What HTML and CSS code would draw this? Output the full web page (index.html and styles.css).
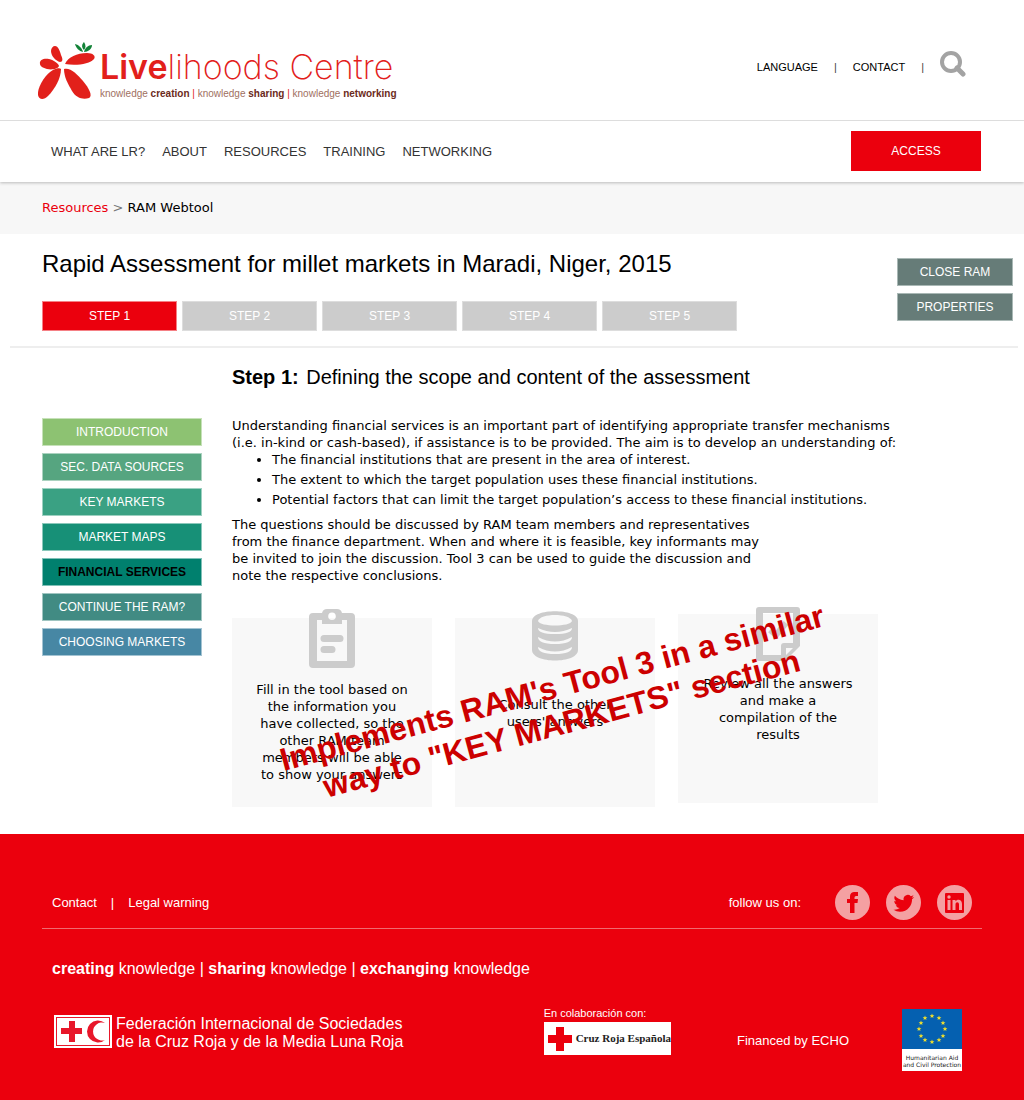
FILE: index.html
```html
<!DOCTYPE html>
<html lang="en">
<head>
<meta charset="utf-8">
<title>RAM Webtool - Livelihoods Centre</title>
<meta name="viewport" content="width=device-width, initial-scale=1">
<link rel="stylesheet" href="styles.css">
</head>
<body>
<header class="site-header">
  <div class="topbar">
    <a class="logo" href="#">
      <svg class="logo-mark" width="58" height="58" viewBox="0 0 58 58" aria-hidden="true">
        <g fill="#e2201b">
          <path d="M17 4C20 4 22 9 23 13C25 17 25 20 22 20C18 19 13 14 13 9C13 6 15 4 17 4Z"/>
          <path d="M2 22C1 17 7 16 11 17C16 18 21 22 21 24C20 27 14 28 9 27C5 26 2 24 2 22Z"/>
          <path d="M27 22C30 15 39 11 49 11C55 11 58 14 56 17C52 22 38 24 27 22Z"/>
          <path d="M23 27C23 36 17 47 10 54C6 58 1 58 0 53C-1 46 7 32 15 28C19 26 22 26 23 27Z"/>
          <path d="M26 27C32 25 39 32 45 39C51 46 55 54 51 56C45 58 38 56 34 49C30 42 26 35 26 27Z"/>
        </g>
        <g fill="#128237">
          <path d="M46 8C43 5 44 2 46 0C48 3 48 6 46 8Z"/>
          <path d="M45 10C41 9 38 6 37 2C41 3 44 6 45 10Z"/>
          <path d="M46 10C47 6 50 3 54 3C54 7 50 10 46 10Z"/>
        </g>
      </svg>
      <span class="logo-text">
        <span class="logo-name"><strong>Live</strong>lihoods Centre</span>
        <span class="logo-tag">knowledge <b>creation</b> <i>|</i> knowledge <b>sharing</b> <i>|</i> knowledge <b>networking</b></span>
      </span>
    </a>
    <nav class="utility" aria-label="Utility">
      <a href="#">LANGUAGE</a>
      <span>|</span>
      <a href="#">CONTACT</a>
      <span>|</span>
      <button class="search" type="button" aria-label="Search">
        <svg width="26" height="26" viewBox="0 0 26 26" fill="none" stroke="#a3a3a3">
          <circle cx="11" cy="11" r="9" stroke-width="4"/>
          <path d="M17 17L23 23" stroke-width="5" stroke-linecap="round"/>
        </svg>
      </button>
    </nav>
  </div>
  <div class="mainbar">
    <nav class="menu" aria-label="Main">
      <a href="#">WHAT ARE LR?</a>
      <a href="#">ABOUT</a>
      <a href="#">RESOURCES</a>
      <a href="#">TRAINING</a>
      <a href="#">NETWORKING</a>
    </nav>
    <button class="access" type="button">ACCESS</button>
  </div>
</header>

<nav class="breadcrumb" aria-label="Breadcrumb"><a href="#">Resources</a> <span>&gt;</span> RAM Webtool</nav>

<main>
  <section class="intro">
    <div class="intro-main">
      <h1>Rapid Assessment for millet markets in Maradi, Niger, 2015</h1>
      <div class="steps">
        <button class="step step-active" type="button">STEP 1</button>
        <button class="step" type="button">STEP 2</button>
        <button class="step" type="button">STEP 3</button>
        <button class="step" type="button">STEP 4</button>
        <button class="step" type="button">STEP 5</button>
      </div>
    </div>
    <div class="actions">
      <button class="action" type="button">CLOSE RAM</button>
      <button class="action" type="button">PROPERTIES</button>
    </div>
  </section>

  <div class="workspace">
    <h2><strong>Step 1:</strong> Defining the scope and content of the assessment</h2>
    <nav class="sections" aria-label="Step sections">
      <a class="introduction" href="#">INTRODUCTION</a>
      <a class="sources" href="#">SEC. DATA SOURCES</a>
      <a class="key-markets" href="#">KEY MARKETS</a>
      <a class="maps" href="#">MARKET MAPS</a>
      <a class="services" href="#" aria-current="page">FINANCIAL SERVICES</a>
      <a class="continue" href="#">CONTINUE THE RAM?</a>
      <a class="choosing" href="#">CHOOSING MARKETS</a>
    </nav>
    <article class="content">
      <p class="lead">Understanding financial services is an important part of identifying appropriate transfer mechanisms (i.e. in-kind or cash-based), if assistance is to be provided. The aim is to develop an understanding of:</p>
      <ul>
        <li>The financial institutions that are present in the area of interest.</li>
        <li>The extent to which the target population uses these financial institutions.</li>
        <li>Potential factors that can limit the target population’s access to these financial institutions.</li>
      </ul>
      <p class="questions">The questions should be discussed by RAM team members and representatives from the finance department. When and where it is feasible, key informants may be invited to join the discussion. Tool 3 can be used to guide the discussion and note the respective conclusions.</p>
      <div class="cards">
        <div class="card">
          <svg width="46" height="60" viewBox="0 0 46 60" aria-hidden="true">
            <path fill="#ccc" fill-rule="evenodd" d="M4 4H13Q14 0 18 0H28Q32 0 33 4H42Q46 4 46 8V55Q46 59 42 59H4Q0 59 0 55V8Q0 4 4 4ZM8 11V52H38V11H33V15H13V11ZM23 3.500A3.800 3.800 0 1 0 23 11.100A3.800 3.800 0 1 0 23 3.500Z"/>
            <path stroke="#ccc" stroke-width="7" stroke-linecap="round" d="M15 29.500H31M15 40.500H23"/>
          </svg>
          <p>Fill in the tool based on the information you have collected, so the other RAM team members will be able to show your answers</p>
        </div>
        <div class="card card-short">
          <svg width="46" height="60" viewBox="0 0 46 60" aria-hidden="true">
            <path fill="#ccc" d="M0 12C0 -1 46 -1 46 12V41C46 55 0 55 0 41Z"/>
            <path fill="#f8f8f8" d="M6 12C8 4 38 4 40 12C38 18 8 18 6 12Z"/>
            <path fill="#f8f8f8" d="M6 19Q23 27 40 19Q40 25 23 25Q6 25 6 19ZM6 28Q23 37 40 28Q40 35 23 35Q6 35 6 28ZM6 38Q23 47 40 38Q40 45 23 45Q6 45 6 38Z"/>
          </svg>
          <p>Consult the other users' answers</p>
        </div>
        <div class="card card-high">
          <svg width="44" height="60" viewBox="0 0 44 60" aria-hidden="true">
            <path fill="#ccc" fill-rule="evenodd" d="M3 2H41Q44 2 44 5V41L29 56H3Q0 56 0 53V5Q0 2 3 2ZM7 8V50H25V41Q25 38 28 38H37V8ZM30 43V50L37 43Z"/>
            <path fill="none" stroke="#ccc" stroke-width="6" d="M14 25L20 30L30 18"/>
          </svg>
          <p>Review all the answers and make a compilation of the results</p>
        </div>
        <p class="notice">Implements RAM's Tool 3 in a similar<br>way to "KEY MARKETS" section</p>
      </div>
    </article>
  </div>
</main>

<footer class="site-footer">
  <div class="footer-top">
    <nav class="legal" aria-label="Footer">
      <a href="#">Contact</a><span>|</span><a href="#">Legal warning</a>
    </nav>
    <div class="social">
      <span>follow us on:</span>
      <div class="social-links">
        <a href="#" aria-label="Facebook"><svg width="35" height="35" viewBox="0 0 35 35"><circle cx="17.500" cy="17.500" r="17.500" fill="#f4a0a2"/><path fill="#eb000d" d="M15 28V18H12V14H15V12C15 8 17 7 20 7H23V11H21Q19.500 11 19.500 12.500V14H23L22.500 18H19.500V28Z"/></svg></a>
        <a href="#" aria-label="Twitter"><svg width="35" height="35" viewBox="0 0 35 35"><circle cx="17.500" cy="17.500" r="17.500" fill="#f4a0a2"/><path fill="#eb000d" transform="translate(7.500 8) scale(.86)" d="M23.953 4.570a10 10 0 01-2.825.775 4.958 4.958 0 002.163-2.723c-.951.555-2.005.959-3.127 1.184a4.920 4.920 0 00-8.384 4.482C7.690 8.095 4.067 6.130 1.640 3.162a4.822 4.822 0 00-.666 2.475c0 1.710.870 3.213 2.188 4.096a4.904 4.904 0 01-2.228-.616v.060a4.923 4.923 0 003.946 4.827 4.996 4.996 0 01-2.212.085 4.936 4.936 0 004.604 3.417 9.867 9.867 0 01-6.102 2.105c-.390 0-.779-.023-1.170-.067a13.995 13.995 0 007.557 2.209c9.053 0 13.998-7.496 13.998-13.985 0-.210 0-.420-.015-.630A9.935 9.935 0 0024 4.590z"/></svg></a>
        <a href="#" aria-label="LinkedIn"><svg width="35" height="35" viewBox="0 0 35 35"><circle cx="17.500" cy="17.500" r="17.500" fill="#f4a0a2"/><rect x="8" y="8" width="19" height="20" rx="1" fill="#eb000d"/><path fill="#f4a0a2" d="M10.500 15H13.500V25H10.500ZM15.500 15H18.500V16.500C20 14 25 14 25 19V25H22V19.500C22 16.500 18.500 16.500 18.500 19.500V25H15.500Z"/><circle cx="12" cy="12" r="1.700" fill="#f4a0a2"/></svg></a>
      </div>
    </div>
  </div>
  <p class="motto"><b>creating</b> knowledge | <b>sharing</b> knowledge | <b>exchanging</b> knowledge</p>
  <div class="partners">
    <a class="federation" href="#">
      <svg width="58" height="33" viewBox="0 0 58 33" aria-hidden="true">
        <rect width="58" height="33" fill="#fff"/>
        <rect x="2.500" y="2.500" width="53" height="28" fill="none" stroke="#e8172a"/>
        <path fill="#e8172a" d="M15 6H21V13H28V19H21V27H15V19H7V13H15Z"/>
        <path fill="#e8172a" d="M51 8A11 11 0 1 0 51 25A9 9 0 1 1 51 8Z"/>
      </svg>
      <span>Federación Internacional de Sociedades<br>de la Cruz Roja y de la Media Luna Roja</span>
    </a>
    <div class="collaboration">
      <span>En colaboración con:</span>
      <a class="cruz-roja" href="#">
        <svg width="24" height="24" viewBox="0 0 24 24" aria-hidden="true"><path fill="#eb000d" d="M8 0H16V8H24V16H16V24H8V16H0V8H8Z"/></svg>
        Cruz Roja Española
      </a>
    </div>
    <div class="funding">
      <span>Financed by ECHO</span>
      <a class="echo" href="#">
        <svg width="60" height="40" viewBox="-30 -20 60 40" aria-hidden="true">
          <defs><path id="star" fill="#f3e12b" d="M0-2.400L.7-.7H2.400L1 .4 1.500 2 0 1-1.500 2-1 .4-2.400-.7H-.7Z"/></defs>
          <rect x="-30" y="-20" width="60" height="40" fill="#0560b0"/>
          <use href="#star" x="0" y="-13"/><use href="#star" x="7" y="-11"/><use href="#star" x="11" y="-6"/>
          <use href="#star" x="13" y="0"/><use href="#star" x="11" y="7"/><use href="#star" x="7" y="11"/>
          <use href="#star" x="0" y="13"/><use href="#star" x="-7" y="11"/><use href="#star" x="-11" y="7"/>
          <use href="#star" x="-13" y="0"/><use href="#star" x="-11" y="-6"/><use href="#star" x="-7" y="-11"/>
        </svg>
        <span>Humanitarian Aid<br>and Civil Protection</span>
      </a>
    </div>
  </div>
</footer>
</body>
</html>
```

FILE: styles.css
```css
* { box-sizing: border-box; }

body {
  margin: 0;
  background: #fff;
  color: #000;
  font: 13px/17px "DejaVu Sans", sans-serif;
}

a { color: inherit; text-decoration: none; }
h1, h2, p, ul { margin: 0; padding: 0; }
svg { display: block; }
button { border: 0; padding: 0; cursor: pointer; }

/* Header */
.site-header,
.site-footer,
button,
h1,
h2,
.sections { font-family: "Liberation Sans", Arial, sans-serif; }

.site-header {
  position: relative;
  background: #fff;
  box-shadow: 0 1px 3px #bbb;
}

.topbar {
  display: flex;
  justify-content: space-between;
  align-items: flex-start;
  padding: 42px 58px 20px 38px;
  border-bottom: 1px solid #ddd;
}

.logo { display: flex; gap: 4px; }

.logo-text {
  display: flex;
  flex-direction: column;
  padding-top: 4px;
  color: #e2201b;
}

.logo-name {
  font: 200 34px/42px Inter, "Liberation Sans", sans-serif;
  white-space: nowrap;
}
.logo-name strong { font-weight: 600; }

.logo-tag {
  font-size: 10px;
  line-height: 12px;
  color: #a0705f;
  white-space: nowrap;
}
.logo-tag b { color: #6b2a20; }
.logo-tag i { color: #e2201b; font-style: normal; }

.utility {
  display: flex;
  align-items: flex-end;
  gap: 16px;
  padding-top: 9px;
  font-size: 11px;
  line-height: 20px;
}
.utility span { color: #444; }
.search { background: none; }

.mainbar {
  display: flex;
  justify-content: space-between;
  align-items: center;
  padding: 10px 43px 11px 51px;
}

.menu {
  display: flex;
  gap: 17px;
  color: #333;
  font-size: 13px;
}

.access {
  width: 130px;
  height: 40px;
  background: #eb000d;
  color: #fff;
  font-size: 12px;
}

.breadcrumb {
  padding: 17px 42px 18px;
  background: #f7f7f7;
}
.breadcrumb a { color: #eb000d; }
.breadcrumb span { color: #777; }

/* Assessment title and steps */
.intro {
  display: flex;
  justify-content: space-between;
  margin: 0 6px 0 10px;
  padding: 16px 5px 15px 32px;
  border-bottom: 2px solid #eee;
}

h1 { font-size: 24px; font-weight: 400; line-height: 28px; }

.steps { display: flex; gap: 5px; padding-top: 23px; }

.step {
  width: 135px;
  height: 30px;
  border: 1px solid #ddd;
  background: #ccc;
  color: #fff;
  font-size: 12px;
}
.step-active { border-color: #f58085; background: #eb000d; }

.actions {
  display: flex;
  flex-direction: column;
  gap: 7px;
  padding-top: 8px;
}

.action {
  width: 116px;
  height: 28px;
  border: 1px solid #a9b8b5;
  background: #667c78;
  color: #fff;
  font-size: 12px;
}

/* Step workspace */
.workspace {
  display: grid;
  grid-template-columns: 160px 1fr;
  column-gap: 30px;
  padding: 17px 42px 27px;
}

h2 {
  grid-column: 2;
  margin-bottom: 28px;
  font-size: 20px;
  font-weight: 400;
  line-height: 24px;
}
h2 strong { margin-right: 2px; }

.sections {
  grid-column: 1;
  display: flex;
  flex-direction: column;
  gap: 7px;
  padding-top: 1px;
  color: #fff;
  font-size: 12px;
  text-align: center;
}
.sections a {
  height: 28px;
  border: 1px solid #ffffff80;
  line-height: 26px;
}
.introduction { background: #8dc272; }
.sources { background: #56a580; }
.key-markets { background: #3aa183; }
.maps { background: #179077; }
.services { background: #00806e; color: #000; font-weight: 700; }
.continue { background: #418b83; }
.choosing { background: #4787a4; }

.lead { max-width: 670px; }
.content ul {
  display: flex;
  flex-direction: column;
  gap: 3px;
  padding: 0 0 8px 40px;
}
.questions { max-width: 532px; }

.cards {
  position: relative;
  display: flex;
  align-items: flex-end;
  gap: 23px;
  padding-top: 30px;
}

.card {
  display: flex;
  flex-direction: column;
  align-items: center;
  width: 200px;
  height: 189px;
  padding: 0 23px;
  background: #f8f8f8;
  text-align: center;
}
.card svg { margin-top: -9px; }
.card p { padding-top: 12px; }
.card-high { align-self: flex-start; margin-bottom: 4px; }
.card-high p { padding-top: 10px; }
.card-short { padding: 0 40px; }
.card-short p { padding-top: 27px; }

.notice {
  position: absolute;
  left: 40px;
  top: 85px;
  width: 570px;
  color: #c00;
  font: 700 32px/37px "Liberation Sans", Arial, sans-serif;
  text-align: center;
  transform: rotate(-15deg);
}

/* Footer */
.site-footer {
  padding: 51px 42px 29px;
  background: #eb000d;
  color: #fff;
}

.footer-top {
  display: flex;
  justify-content: space-between;
  align-items: center;
  padding: 0 10px 8px;
  border-bottom: 1px solid #f06a70;
}
.legal { display: flex; gap: 14px; }
.social { display: flex; align-items: center; gap: 34px; }
.social-links { display: flex; gap: 16px; }

.motto { padding: 30px 10px; font-size: 16px; line-height: 20px; }

.partners { display: flex; gap: 66px; padding: 0 20px 0 12px; }

.federation {
  display: flex;
  flex: 1;
  gap: 4px;
  padding-top: 6px;
  font-size: 16px;
  line-height: 18px;
  white-space: nowrap;
}

.collaboration { font-size: 11px; line-height: 13px; }
.collaboration > span { display: block; margin-top: -2px; padding-bottom: 2px; }

.cruz-roja {
  display: flex;
  align-items: center;
  gap: 4px;
  height: 33px;
  padding-left: 4px;
  background: #fff;
  color: #222;
  font: 700 11px/13px "Liberation Serif", "Times New Roman", serif;
  white-space: nowrap;
}

.funding { display: flex; gap: 53px; }
.funding > span { padding-top: 23px; }

.echo {
  width: 60px;
  background: #fff;
  color: #222;
  font: 6px/7px "DejaVu Sans", sans-serif;
  text-align: center;
  white-space: nowrap;
}
.echo span { display: block; padding: 5px 0 3px; }
```
